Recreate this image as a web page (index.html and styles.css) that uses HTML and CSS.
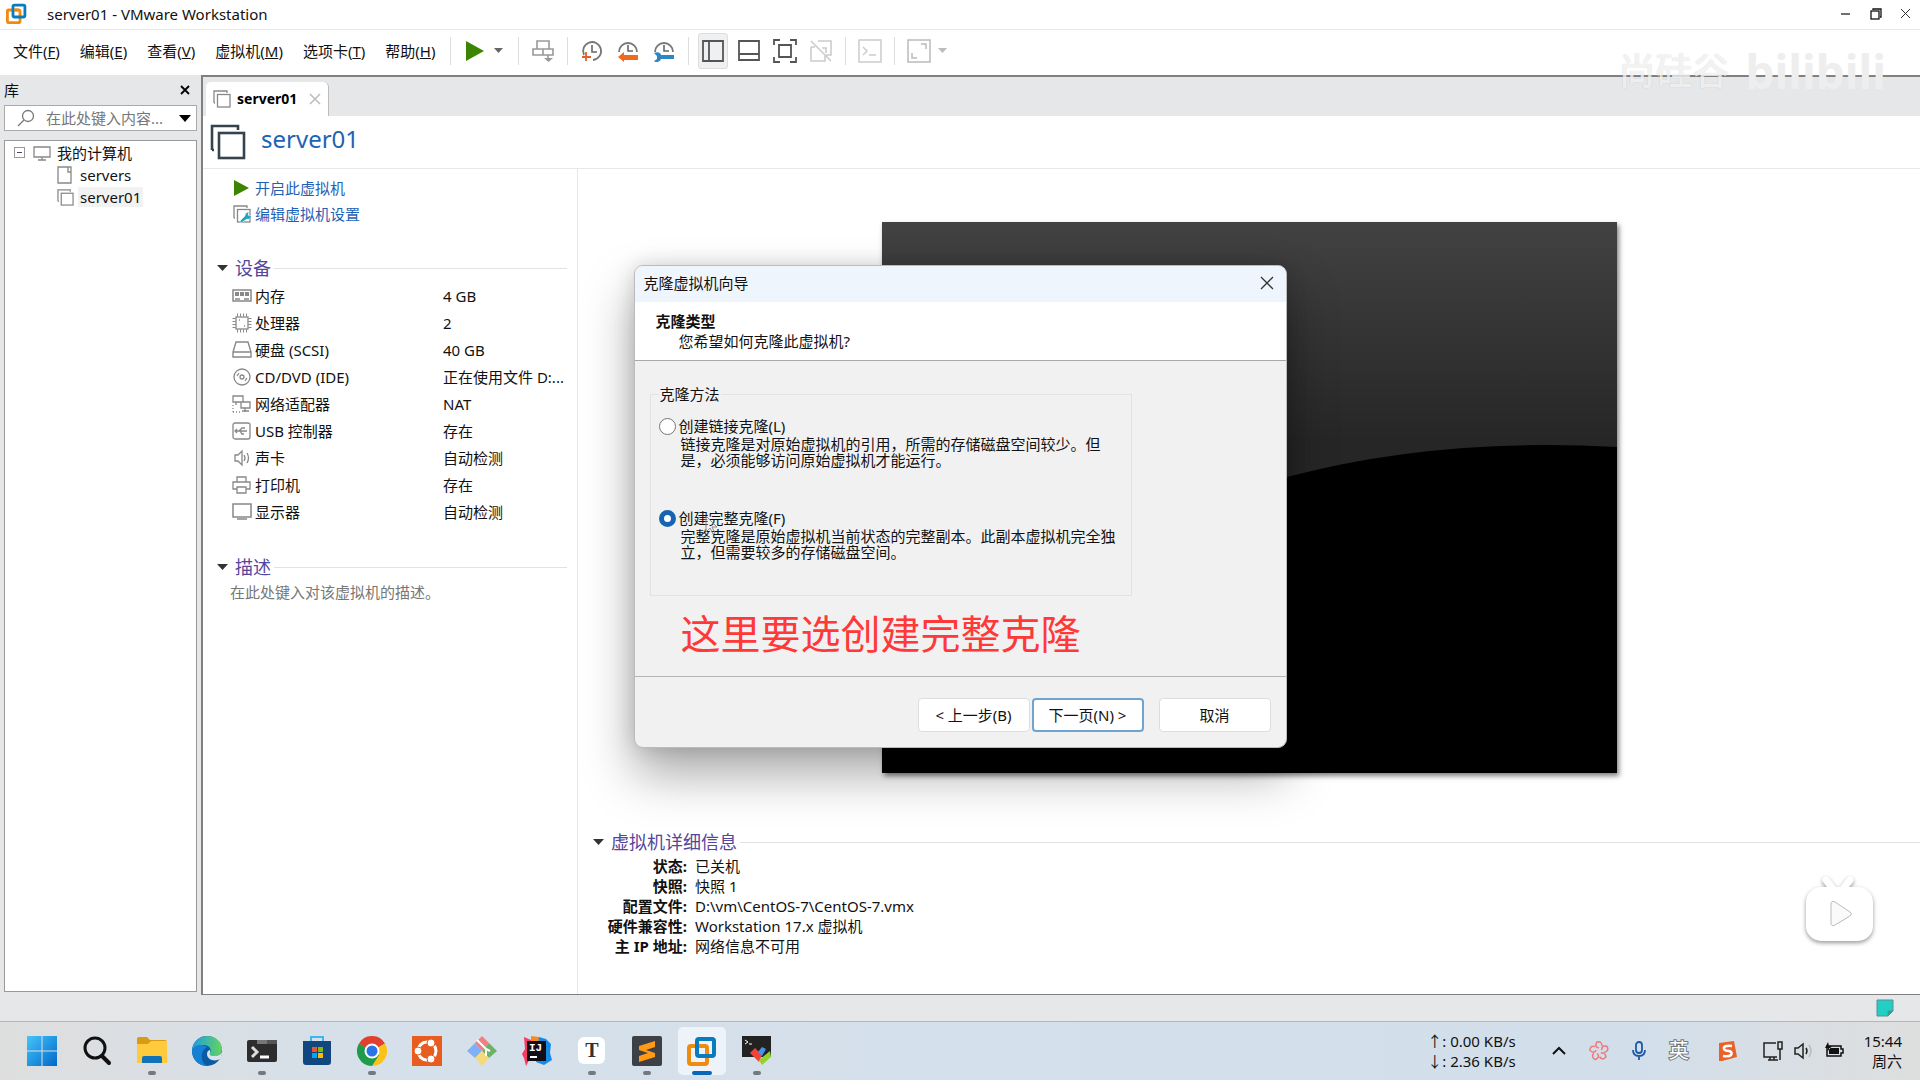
FILE: index.html
```html
<!DOCTYPE html>
<html lang="zh-CN">
<head>
    <meta charset="UTF-8">
    <meta name="viewport" content="width=device-width, initial-scale=1.0">
    <title>server01 - VMware Workstation</title>
    <link rel="stylesheet" href="styles.css">
</head>
<body>
    <svg class="defs" width="0" height="0">
        <symbol id="vmware" viewBox="0 0 30 30">
            <rect x="2" y="10" width="18" height="18" rx="2" fill="none" stroke="#ef8c10" stroke-width="4"/>
            <rect x="10" y="3" width="17" height="17" rx="2" fill="none" stroke="#0a7cbd" stroke-width="4"/>
            <path d="M12 10h6" fill="none" stroke="#ef8c10" stroke-width="4"/>
        </symbol>
        <symbol id="vm" viewBox="0 0 18 18">
            <path d="M1 13V1h13v2M1 13h1" fill="none" stroke="currentColor" stroke-width="1.3"/>
            <rect x="4.500" y="4.500" width="12.500" height="12.500" fill="none" stroke="currentColor" stroke-width="1.3"/>
        </symbol>
        <symbol id="clock" viewBox="0 0 22 22">
            <path d="M3 15a9 9 0 1 1 9 5" fill="none" stroke="#777" stroke-width="1.8"/>
            <path d="M11 5v7h5" fill="none" stroke="#666" stroke-width="1.6"/>
        </symbol>
        <symbol id="clock-half" viewBox="0 0 22 22">
            <path d="M2 12a9 9 0 1 1 18 0" fill="none" stroke="#777" stroke-width="1.8"/>
            <path d="M11 5v6h5" fill="none" stroke="#666" stroke-width="1.6"/>
        </symbol>
    </svg>

    <!-- 标题栏 -->
    <header class="titlebar">
        <svg class="logo" width="21" height="21"><use href="#vmware"/></svg>
        <span class="name">server01 - VMware Workstation</span>
        <button class="win" aria-label="最小化"><svg width="12" height="12"><path d="M1 6h9" stroke="#111" stroke-width="1.2"/></svg></button>
        <button class="win" aria-label="还原"><svg width="12" height="12" fill="none" stroke="#111" stroke-width="1.3"><path d="M3 2V1h8v8h-1"/><rect x="1" y="3" width="8" height="8"/></svg></button>
        <button class="win" aria-label="关闭"><svg width="12" height="12"><path d="M1 1l9 9M10 1l-9 9" stroke="#333"/></svg></button>
    </header>

    <!-- 菜单和工具栏 -->
    <nav class="menubar">
        <div class="menus">
            <button>文件(<u>F</u>)</button>
            <button>编辑(<u>E</u>)</button>
            <button>查看(<u>V</u>)</button>
            <button>虚拟机(<u>M</u>)</button>
            <button>选项卡(<u>T</u>)</button>
            <button>帮助(<u>H</u>)</button>
        </div>
        <div class="tools">
            <button aria-label="开启"><svg width="20" height="22"><path d="M1 1l18 10-18 10z" fill="#3c8500"/></svg></button>
            <button class="drop" aria-label="电源选项"><svg width="10" height="6"><path d="M0 0h9l-4.500 5z" fill="#666"/></svg></button>
        </div>
        <div class="tools">
            <button aria-label="发送按键"><svg width="22" height="24" fill="none" stroke="#999" stroke-width="1.6"><path d="M5 10V2h12v8M1 10h20v6H1zM11 10v6M16 16v5"/><path d="M12 19h9l-4.500 4z" fill="#999" stroke="none"/></svg></button>
        </div>
        <div class="tools">
            <button aria-label="拍摄快照"><svg width="22" height="22"><use href="#clock"/><path d="M5 12v9M1 17h9" stroke="#e0622a" stroke-width="1.800"/></svg></button>
            <button aria-label="恢复快照"><svg width="22" height="22"><use href="#clock-half"/><path d="M1 17l6-5v3h14v5H7v2z" fill="#f06a1a"/></svg></button>
            <button aria-label="管理快照"><svg width="22" height="22"><use href="#clock-half"/><path d="M1 13c4-2 7 0 7 2h13v4H8c-1 3-5 4-7 2l3-2v-3z" fill="#2f86c4"/></svg></button>
        </div>
        <div class="tools">
            <button class="on" aria-label="显示库"><svg width="22" height="22" fill="none" stroke="#555" stroke-width="1.800"><path d="M1 1h20v20H1zM7 1v20"/></svg></button>
            <button aria-label="缩略图栏"><svg width="22" height="22" fill="none" stroke="#555" stroke-width="1.800"><path d="M1 1h20v19H1zM1 14h20"/></svg></button>
            <button aria-label="全屏"><svg width="24" height="24" fill="none" stroke="#555" stroke-width="1.800"><path d="M1 6V1h6M17 1h6v5M23 18v5h-6M7 23H1v-5M6 6h12v12H6z"/></svg></button>
            <button aria-label="Unity"><svg width="22" height="22" fill="none" stroke="#ccc" stroke-width="1.600"><path d="M1 7v14h14V15M1 7h4M8 1h13v14h-5M12 8h4v5M1 1l20 20"/></svg></button>
        </div>
        <div class="tools">
            <button aria-label="控制台"><svg width="24" height="24" fill="none" stroke="#ccc" stroke-width="1.500"><path d="M1 1h22v22H1zM5 8l4 4-4 4M11 16h7"/></svg></button>
        </div>
        <div class="tools">
            <button aria-label="拉伸"><svg width="24" height="24" fill="none" stroke="#bbb" stroke-width="1.500"><path d="M1 1h22v22H1zM14 5h5v5M10 19H5v-5"/></svg></button>
            <button class="drop" aria-label="拉伸选项"><svg width="10" height="6"><path d="M0 0h9l-4.500 5z" fill="#bbb"/></svg></button>
        </div>
    </nav>

    <div class="workspace">
        <!-- 库 -->
        <aside class="library">
            <div class="lib-head">
                <span>库</span>
                <button aria-label="关闭库"><svg width="10" height="10"><path d="M1 1l8 8M9 1l-8 8" stroke="#000" stroke-width="1.800"/></svg></button>
            </div>
            <div class="search">
                <svg width="18" height="18" fill="none" stroke="#777" stroke-width="1.300"><circle cx="11" cy="7" r="5.500"/><path d="M7 11l-6 6"/></svg>
                <input type="text" aria-label="搜索" placeholder="在此处键入内容...">
                <button aria-label="搜索选项"><svg width="12" height="7"><path d="M0 0h12l-6 7z" fill="#000"/></svg></button>
            </div>
            <ul class="tree">
                <li><svg width="12" height="12" fill="none" stroke="#999"><rect x=".5" y=".5" width="10" height="10"/><path d="M3 5.500h5" stroke="#447"/></svg><svg width="18" height="15" fill="none" stroke="#888" stroke-width="1.300"><path d="M1 1h16v10H1zM9 11v3M5 14h8"/></svg><span>我的计算机</span></li>
                <li class="child"><svg width="17" height="18" fill="none" stroke="#888" stroke-width="1.300"><path d="M14 6v11H1V1h13v5h-3V1"/></svg><span>servers</span></li>
                <li class="child sel"><svg width="17" height="17"><use href="#vm"/></svg><span>server01</span></li>
            </ul>
        </aside>

        <main class="main">
            <div class="tabs">
                <div class="tab">
                    <svg width="18" height="18"><use href="#vm"/></svg>
                    <b>server01</b>
                    <button aria-label="关闭标签"><svg width="12" height="12"><path d="M1 1l10 10M11 1L1 11" stroke="#bbb" stroke-width="1.500"/></svg></button>
                </div>
            </div>
            <div class="vm-head">
                <svg width="36" height="36" viewBox="0 0 18 18"><use href="#vm"/></svg>
                <h1>server01</h1>
            </div>

            <div class="vm-body">
                <section class="side">
                    <a class="action" href="#"><svg width="18" height="18"><path d="M1 1l15 8-15 8z" fill="#3c8500"/></svg>开启此虚拟机</a>
                    <a class="action" href="#"><svg width="18" height="18"><g color="#888"><use href="#vm"/></g><path d="M8 18l-1-2 5-5c0-3 2-4 4-4l-1 3 2 1 1-1c1 3-2 5-4 4z" fill="#1da3c4" stroke="#fff" stroke-width=".5"/></svg>编辑虚拟机设置</a>

                    <h2 class="devices-title"><svg width="11" height="7"><path d="M0 0h11l-5.500 6z" fill="#333"/></svg>设备</h2>
                    <dl class="devices">
                        <dt><svg width="20" height="18" fill="none" stroke="#888" stroke-width="1.500"><path d="M1 3h18v11H1z"/><path d="M3 7h14" stroke-width="4" stroke-dasharray="4 1"/><path d="M3 12h5M12 12h5"/></svg>内存</dt><dd>4 GB</dd>
                        <dt><svg width="20" height="20" fill="none" stroke="#888" stroke-width="1.300"><rect x="4" y="4" width="12" height="12"/><path d="M5 2h10M5 18h10M2 5v10M18 5v10" stroke-width="3" stroke-dasharray="1 2"/><path d="M7 7h1M12 13h1"/></svg>处理器</dt><dd>2</dd>
                        <dt><svg width="20" height="18" fill="none" stroke="#888" stroke-width="1.400"><path d="M4 1h12l3 10v5H1v-5zM1 11h18"/></svg>硬盘 (SCSI)</dt><dd>40 GB</dd>
                        <dt><svg width="20" height="18" fill="none" stroke="#888" stroke-width="1.300"><circle cx="10" cy="9" r="8"/><circle cx="10" cy="9" r="2"/><path d="M5 8l2-3M15 10l-2 3"/></svg>CD/DVD (IDE)</dt><dd>正在使用文件 D:...</dd>
                        <dt><svg width="20" height="18" fill="none" stroke="#888" stroke-width="1.300"><path d="M1 1h10v6H1zM4 7v3M9 7h9v6H9zM13 13v4M10 16h7"/><path d="M1 17h9M1 10v7" stroke-dasharray="1 2"/></svg>网络适配器</dt><dd>NAT</dd>
                        <dt><svg width="20" height="18" fill="none" stroke="#888" stroke-width="1.300"><rect x="1" y="1" width="17" height="16" rx="2"/><path d="M4 9h11M7 9l3-3h3M8 9l2 3h2M5 7L3 9l2 2"/></svg>USB 控制器</dt><dd>存在</dd>
                        <dt><svg width="20" height="18" fill="none" stroke="#888" stroke-width="1.300"><path d="M3 6h3l4-4v14l-4-4H3zM12 6q2 3 0 6M15 4q3 5 0 10"/></svg>声卡</dt><dd>自动检测</dd>
                        <dt><svg width="20" height="18" fill="none" stroke="#888" stroke-width="1.300"><path d="M5 6V1h9v5M5 13H1V6h17v7h-4M5 11h9v6H5z"/></svg>打印机</dt><dd>存在</dd>
                        <dt><svg width="20" height="18" fill="none" stroke="#888" stroke-width="1.500"><path d="M1 1h18v13H1zM5 16h10"/></svg>显示器</dt><dd>自动检测</dd>
                    </dl>

                    <h2><svg width="11" height="7"><path d="M0 0h11l-5.500 6z" fill="#333"/></svg>描述</h2>
                    <p class="note">在此处键入对该虚拟机的描述。</p>
                </section>

                <section class="summary">
                    <svg class="preview" viewBox="0 0 735 551" preserveAspectRatio="none">
                        <defs>
                            <linearGradient id="sky" x1="0" y1="0" x2="0" y2="1">
                                <stop offset="0" stop-color="#424242"/>
                                <stop offset=".5" stop-color="#262626"/>
                            </linearGradient>
                        </defs>
                        <rect width="735" height="551" fill="#000"/>
                        <path d="M0 0h735v225q-180-10-330 30Q180 320 0 440z" fill="url(#sky)"/>
                    </svg>
                    <h2><svg width="11" height="7"><path d="M0 0h11l-5.500 6z" fill="#333"/></svg>虚拟机详细信息</h2>
                    <dl class="details">
                        <dt>状态:</dt><dd>已关机</dd>
                        <dt>快照:</dt><dd>快照 1</dd>
                        <dt>配置文件:</dt><dd>D:\vm\CentOS-7\CentOS-7.vmx</dd>
                        <dt>硬件兼容性:</dt><dd>Workstation 17.x 虚拟机</dd>
                        <dt>主 IP 地址:</dt><dd>网络信息不可用</dd>
                    </dl>
                </section>
            </div>
        </main>
    </div>

    <div class="statusbar">
        <svg width="18" height="18"><path d="M1 1h16v11l-5 5H1z" fill="#22cfc4" stroke="#5a8f90"/><path d="M17 12h-5v5" fill="#17a9a6" stroke="#5a8f90"/></svg>
    </div>

    <!-- 任务栏 -->
    <footer class="taskbar">
        <div class="apps">
            <button aria-label="开始"><svg width="30" height="30"><defs><linearGradient id="win" x1="0" y1="0" x2="1" y2="1"><stop offset="0" stop-color="#45c5fb"/><stop offset="1" stop-color="#0068c8"/></linearGradient></defs><path d="M0 0h14.500v14.500H0zM15.500 0H30v14.500H15.500zM0 15.500h14.500V30H0zM15.500 15.500H30V30H15.500z" fill="url(#win)"/></svg></button>
            <button aria-label="搜索"><svg width="30" height="30" fill="none" stroke="#111"><circle cx="13" cy="12" r="10" stroke-width="3"/><path d="M20 20l7 7" stroke-width="4" stroke-linecap="round"/></svg></button>
            <button class="run" aria-label="文件资源管理器"><svg width="30" height="30"><path d="M0 3q0-2 2-2h8l3 3h15q2 0 2 2v8H0z" fill="#d99a14"/><path d="M0 8h11l3-3h16v22H0z" fill="#ffcb3d"/><path d="M5 27v-5q0-2 2-2h16q2 0 2 2v5z" fill="#1272b8"/></svg></button>
            <button aria-label="Edge"><svg width="30" height="30"><defs><linearGradient id="edge" x1="0" y1="0" x2="1" y2="0"><stop offset="0" stop-color="#1b9de2"/><stop offset="1" stop-color="#65d45f"/></linearGradient></defs><circle cx="15" cy="15" r="15" fill="#0c59a4"/><path d="M0 14C1 5 8 0 15 0c9 0 15 6 15 13 0 5-4 7-8 7-3 0-5-1-4-3 2-4-1-8-6-8-6 0-10 3-12 5z" fill="url(#edge)"/><path d="M0 14c0 9 6 16 15 16-6-3-8-14 0-19-7-4-13-1-15 3z" fill="#1681d4"/><path d="M18 17c-1 2 1 3 4 3 3 0 6-1 8-4 0 3-1 6-2 7-5 3-13 1-13-5 0-3 2-4 3-4z" fill="#d9e3ea"/></svg></button>
            <button class="run" aria-label="终端"><svg width="30" height="30"><rect y="4" width="30" height="22" rx="2" fill="#2d2d2d"/><path d="M10 4h10v4H10z" fill="#777"/><path d="M20 4h10v4H20z" fill="#555"/><path d="M5 11l5 5-5 5" fill="none" stroke="#ddd" stroke-width="3"/><path d="M13 21h9" stroke="#fff" stroke-width="3"/></svg></button>
            <button aria-label="商店"><svg width="30" height="30"><path d="M9 6V1h12v5" fill="none" stroke="#39b8ef" stroke-width="2"/><path d="M1 5h28v21q0 3-3 3H4q-3 0-3-3z" fill="#12467f"/><path d="M10 11h5v5h-5z" fill="#f0532d"/><path d="M16 11h5v5h-5z" fill="#80bc06"/><path d="M10 17h5v5h-5z" fill="#05a6f0"/><path d="M16 17h5v5h-5z" fill="#ffba08"/></svg></button>
            <button class="run" aria-label="Chrome"><svg width="30" height="30"><path d="M15 15L2 7.500A15 15 0 0 1 28 7.500z" fill="#e2402f"/><path d="M15 15L28 7.500A15 15 0 0 1 15 30z" fill="#fbc318"/><path d="M15 15l7 4-7 11A15 15 0 0 1 2 7.500z" fill="#209b4c"/><path d="M2 7.500h26H15v7.500z" fill="#e2402f"/><circle cx="15" cy="15" r="7.500" fill="#fff"/><circle cx="15" cy="15" r="5.500" fill="#2a74e8"/></svg></button>
            <button aria-label="Ubuntu"><svg width="30" height="30"><rect width="30" height="30" fill="#e85c1f"/><circle cx="15" cy="15" r="9" fill="none" stroke="#fff" stroke-width="3"/><g fill="#fff" stroke="#e85c1f"><circle cx="6" cy="15" r="4"/><circle cx="19" cy="7" r="4"/><circle cx="19" cy="23" r="4"/></g></svg></button>
            <button aria-label="Git"><svg width="30" height="30"><path d="M15 0l7 7-7 8-7-8z" fill="#f08080"/><path d="M8 7l7 8-7 7-8-7z" fill="#80b0f5"/><path d="M22 7l8 8-8 7-7-7z" fill="#6fb267"/><path d="M15 15l7 7-7 8-7-8z" fill="#f5da7c"/><path d="M10 4l9 9v7M19 13l4 2" fill="none" stroke="#fff" stroke-width="2"/></svg></button>
            <button aria-label="IntelliJ IDEA"><svg width="30" height="30"><path d="M2 1l7 3 3 11-8 15-2-8-2-4 3-5z" fill="#f53b67"/><path d="M9 0l8 1 4 9-12-2z" fill="#f78a21"/><path d="M17 1l7 2 5 5-1 9 2 7-8 5-8-3z" fill="#168be6"/><rect x="5" y="5" width="19" height="20" fill="#120d18"/><text x="7" y="15" class="ij">IJ</text><path d="M8 21h7" stroke="#fff" stroke-width="2"/></svg></button>
            <button class="run" aria-label="Typora"><svg width="30" height="30"><rect x="1" y="1" width="27" height="27" rx="6" fill="#fff"/><text x="15" y="21" class="typora">T</text></svg></button>
            <button class="run" aria-label="Sublime Text"><svg width="30" height="30"><rect width="30" height="30" rx="2" fill="#3d4044"/><path d="M7 10l16-5v6l-9 3 9 3v4L7 26v-6l9-3-9-3z" fill="#ff9a12"/></svg></button>
            <button class="run active" aria-label="VMware"><svg width="30" height="30"><use href="#vmware"/></svg></button>
            <button class="run" aria-label="MobaXterm"><svg width="30" height="30"><rect y="0" width="29" height="21" fill="#222"/><path d="M3 4l3 2-3 2M7 8h3" fill="none" stroke="#fff"/><path d="M8 17l5-5 7 7-3 7z" fill="#f04438"/><path d="M20 11l4 2-4 7-4-4z" fill="#4a90ee"/><path d="M17 24l11-9 1 6-9 8z" fill="#8fd32c"/></svg></button>
        </div>
        <div class="net">↑: 0.00 KB/s<br>↓: 2.36 KB/s</div>
        <div class="tray">
            <svg width="20" height="20"><path d="M4 13l6-6 6 6" fill="none" stroke="#111" stroke-width="2"/></svg>
            <svg width="20" height="20" fill="none" stroke="#f07878" stroke-width="1.500"><path id="petal" d="M10 7Q5 6 8 1q5-1 5 4"/><use href="#petal" transform="rotate(72 10 10)"/><use href="#petal" transform="rotate(144 10 10)"/><use href="#petal" transform="rotate(216 10 10)"/><use href="#petal" transform="rotate(288 10 10)"/></svg>
            <svg width="20" height="20" fill="none" stroke="#1d5aa6" stroke-width="1.800"><rect x="7" y="1" width="6" height="11" rx="3"/><path d="M4 9q0 6 6 6t6-6M10 15v4"/></svg>
            <span class="ime">英</span>
        </div>
        <div class="tray sys">
            <svg width="20" height="20"><path d="M2 2l15-2 3 16-15 4H2z" fill="#e8622a"/><path d="M15 5Q6 4 7 8q1 2 5 2 4 1 2 4-2 2-8 1" fill="none" stroke="#fff" stroke-width="2.500"/></svg>
            <svg width="22" height="20" fill="none" stroke="#222" stroke-width="1.500"><path d="M14 2H2v14h13M6 19h10M8 16v3M12 16v3M16 1h4v7h-4zM18 8v11"/></svg>
            <svg width="20" height="20" fill="none" stroke="#222" stroke-width="1.500"><path d="M1 7h3l5-4v14l-5-4H1zM12 7q2 3 0 6"/><path d="M15 4q4 6 0 12" stroke="#bbb"/></svg>
            <svg width="20" height="20"><path d="M3 5h14v3h2v4h-2v3H3z" fill="none" stroke="#111" stroke-width="1.500"/><path d="M5 7h10v6H5zM4 1l-3 6h3l-1 4 5-6H5z" fill="#111"/></svg>
        </div>
        <div class="clock">15:44<br>周六</div>
    </footer>

    <!-- 克隆向导 -->
    <div class="overlay">
        <form class="dialog" role="dialog" aria-label="克隆虚拟机向导">
            <div class="dlg-title">
                <span>克隆虚拟机向导</span>
                <button type="button" aria-label="关闭"><svg width="14" height="14"><path d="M1 1l12 12M13 1L1 13" stroke="#333" stroke-width="1.300"/></svg></button>
            </div>
            <div class="dlg-head">
                <b>克隆类型</b>
                <p>您希望如何克隆此虚拟机?</p>
            </div>
            <div class="dlg-body">
                <fieldset>
                    <legend>克隆方法</legend>
                    <div class="option">
                        <input type="radio" name="clone" id="linked">
                        <label for="linked">创建链接克隆(L)</label>
                        <p>链接克隆是对原始虚拟机的引用，所需的存储磁盘空间较少。但是，必须能够访问原始虚拟机才能运行。</p>
                    </div>
                    <div class="option">
                        <input type="radio" name="clone" id="full" checked>
                        <label for="full">创建完整克隆(F)</label>
                        <p>完整克隆是原始虚拟机当前状态的完整副本。此副本虚拟机完全独立，但需要较多的存储磁盘空间。</p>
                        <svg class="cursor" width="14" height="20"><path d="M1 1v16l4-4 3 6 2-1-3-6h5z" fill="none" stroke="#888"/></svg>
                    </div>
                </fieldset>
                <p class="tip">这里要选创建完整克隆</p>
            </div>
            <div class="dlg-foot">
                <button type="button">&lt; 上一步(B)</button>
                <button type="button" class="next">下一页(N) &gt;</button>
                <button type="button" class="cancel">取消</button>
            </div>
        </form>
    </div>

    <div class="watermark"><span>尚硅谷</span><b>bilibili</b></div>
    <button class="play" aria-label="播放">
        <svg width="76" height="76" viewBox="0 0 76 76">
            <path d="M24 9l7 9M48 9l-7 9" stroke="#fff" stroke-width="7" stroke-linecap="round"/>
            <rect x="4" y="16" width="67" height="54" rx="15" fill="#fff"/>
            <path d="M29 33v19q0 4 4 2l15-9q3-2 0-4l-15-10q-4-2-4 2z" fill="#fafafa" stroke="#bbb"/>
        </svg>
    </button>
</body>
</html>
```
FILE: styles.css
```css
* { box-sizing: border-box; margin: 0; padding: 0; }
body {
    display: flex; flex-direction: column;
    height: 100vh; overflow: hidden;
    position: relative;
    background-color: #e5e7e9;
    color: #111;
    font-family: "Noto Sans", "Noto Sans CJK SC", sans-serif;
    font-size: 15px; line-height: 20px;
}
button, input { font: inherit; color: inherit; border: none; background: none; }
button { display: flex; align-items: center; justify-content: center; }
svg { flex: none; display: block; }
ul { list-style: none; }
a { text-decoration: none; }
.defs { position: absolute; }

/* 标题栏 */
.titlebar {
    display: flex; align-items: center;
    height: 30px; padding: 0 8px 2px 6px;
    background-color: #fff;
    border-bottom: 1px solid #e8e8e8;
}
.name { margin-left: 20px; margin-right: auto; }
.win { width: 12px; height: 20px; margin-left: 18px; }

/* 菜单栏 */
.menubar {
    display: flex; align-items: center;
    height: 45px; padding: 0 0 3px 13px;
    background-color: #fff;
}
.menus { display: flex; gap: 20px; margin-right: 15px; }
.menus button { white-space: nowrap; }
.tools {
    display: flex; align-items: center; gap: 6px;
    height: 28px; padding: 0 9px;
    border-left: 1px solid #ddd;
}
.tools button { width: 30px; height: 36px; }
.tools .drop { width: 14px; margin: 0 3px 0 -4px; }
.tools .on { background-color: #eef0f1; border: 1px solid #ddd; border-radius: 3px; }

/* 库 */
.workspace { display: flex; flex: 1; min-height: 0; }
.library {
    display: flex; flex-direction: column;
    width: 201px; padding: 0 4px 3px 4px;
}
.lib-head { display: flex; justify-content: space-between; align-items: center; height: 30px; padding-right: 7px; }
.search {
    display: flex; align-items: center;
    height: 26px; padding: 0 5px 0 12px;
    border: 1px solid #aaa; background-color: #fff;
}
.search input { flex: 1; min-width: 0; margin-left: 11px; outline: none; }
.search input::placeholder { color: #777; }
.tree { flex: 1; margin-top: 9px; padding: 1px 9px; background-color: #fff; border: 1px solid #999; }
.tree li { display: flex; align-items: center; height: 22px; }
.tree li svg + svg { margin-left: 7px; }
.tree span { margin-left: 4px; padding: 0 2px; }
.tree .child { padding-left: 43px; color: #111; }
.tree .child svg { color: #888; }
.sel span { background-color: #f2f2f2; }

/* 主区域 */
.main {
    display: flex; flex-direction: column; flex: 1; min-width: 0;
    border: solid #808080; border-width: 2px 0 1px 2px;
    background-color: #fff;
}
.tabs { display: flex; align-items: flex-end; height: 39px; padding-left: 3px; background-color: #e5e7e9; }
.tab {
    display: flex; align-items: center; gap: 6px;
    height: 34px; padding: 0 7px;
    background-color: #fff; color: #888;
    border-right: 1px solid #bbb; border-radius: 5px 5px 0 0;
}
.tab b { color: #000; font-size: 14px; }
.tab button { margin-left: 6px; }
.vm-head {
    display: flex; align-items: center; gap: 15px;
    height: 53px; padding-left: 7px;
    color: #34434d; border-bottom: 1px solid #e8e8e8;
}
h1 { margin-bottom: 6px; font-size: 24px; line-height: 32px; font-weight: 400; color: #1f62b5; }
.vm-body { display: flex; flex: 1; min-height: 0; }
.side { width: 375px; padding: 6px 10px 0 14px; border-right: 1px solid #e8e8e8; }
.action { display: flex; align-items: center; gap: 4px; height: 26px; padding-left: 16px; color: #1f62b5; }
h2 {
    display: flex; align-items: center; gap: 7px;
    color: #54469b;
    font-size: 18px; line-height: 26px; font-weight: 400;
}
h2::after { content: ""; flex: 1; height: 1px; margin-left: -4px; background-color: #e2e2e2; }
.devices-title { margin-top: 28px; }
.devices {
    display: grid; grid-template-columns: 211px 1fr; grid-auto-rows: 27px; align-items: center;
    margin: 1px 0 29px 15px;
}
.devices dt { display: flex; align-items: center; gap: 3px; }
.devices dd { white-space: nowrap; }
.note { padding-left: 13px; margin-top: 2px; color: #777; }

.summary { display: flex; flex-direction: column; flex: 1; min-width: 0; padding: 53px 0 0 15px; }
.preview {
    align-self: center;
    width: 735px; max-width: 100%; height: 551px;
    margin: 0 15px 56px 0;
    box-shadow: 2px 3px 5px rgba(0, 0, 0, .5);
}
.details { display: grid; grid-template-columns: 94px 1fr; column-gap: 8px; margin-top: 1px; }
.details dt { text-align: right; font-weight: 700; white-space: nowrap; }

.statusbar { display: flex; align-items: center; justify-content: flex-end; height: 26px; padding-right: 26px; }

/* 任务栏 */
.taskbar {
    display: flex; align-items: center;
    height: 59px; padding: 0 18px;
    border-top: 1px solid #b5b8bb;
    background: linear-gradient(90deg, #dedede, #d5e0ea 20%, #d2dfeb 85%, #dedede);
}
.apps { display: flex; gap: 7px; margin-right: auto; }
.apps button { position: relative; width: 48px; height: 48px; border-radius: 5px; }
.apps .active { background-color: #eef3f9; }
.run::after {
    content: ""; position: absolute; bottom: 0; left: 20px;
    width: 8px; height: 4px; border-radius: 2px;
    background-color: #74797f;
}
.active::after { left: 14px; width: 20px; background-color: #0867b6; }
.ij { font: 700 11px "Liberation Mono", monospace; fill: #fff; }
.typora { font: 700 20px "Liberation Serif", serif; text-anchor: middle; fill: #333; }
.net { margin-right: 33px; white-space: nowrap; }
.tray { display: flex; align-items: center; gap: 20px; }
.sys { gap: 10px; margin: 0 20px 0 28px; }
.sys svg:first-child { margin-right: 15px; }
.ime {
    width: 20px;
    font-size: 20px; color: #fff;
    -webkit-text-stroke: 2px #777;
    paint-order: stroke fill;
}
.clock { text-align: right; white-space: nowrap; }

/* 克隆向导 */
.overlay {
    position: absolute; inset: 0;
    display: flex; justify-content: center; align-items: flex-start;
    padding-top: 265px;
    pointer-events: none;
}
.dialog {
    width: 653px; overflow: visible;
    background-color: #f1f1f1;
    border: 1px solid #bbb; border-radius: 9px;
    box-shadow: 0 26px 50px rgba(0, 0, 0, .34), 0 0 20px rgba(0, 0, 0, .15);
    pointer-events: auto;
}
.dlg-title {
    display: flex; align-items: center; justify-content: space-between;
    height: 36px; padding: 0 12px 2px 9px;
    background-color: #eff5fd; border-radius: 8px 8px 0 0;
}
.dlg-head { height: 59px; padding: 9px 21px 0; background-color: #fff; border-bottom: 1px solid #a8a8a8; }
.dlg-head b { display: block; }
.dlg-head p { padding-left: 23px; }
.dlg-body { padding: 23px 15px 17px; }
fieldset { width: 482px; height: 212px; padding: 12px 7px 0 8px; border: 1px solid #e2e2e2; }
legend { padding: 0 1px; }
.option {
    position: relative;
    display: grid; grid-template-columns: 17px 1fr; column-gap: 3px; align-items: center;
    min-height: 92px; align-content: start;
}
.option input {
    appearance: none;
    width: 17px; height: 17px;
    border: 1px solid #777; border-radius: 50%;
    background-color: #fff;
}
.option input:checked { border: 5px solid #1764b0; }
.option p { grid-column: 2; padding-left: 2px; line-height: 16px; }
.cursor { position: absolute; left: 46px; top: 7px; }
.tip { padding: 13px 0 0 31px; color: #ff3838; font-size: 40px; line-height: 50px; }
.dlg-foot {
    display: flex; justify-content: flex-end;
    height: 71px; padding: 21px 15px 0;
    border-top: 1px solid #b5b5b5;
}
.dlg-foot button {
    width: 112px; height: 34px; margin-left: 2px;
    background-color: #fff;
    border: 1px solid #ddd; border-radius: 4px;
}
.dlg-foot .next { border: 2px solid #6fa3d0; }
.dlg-foot .cancel { margin-left: 15px; }

/* 水印 */
.watermark {
    position: absolute; top: 40px; right: 34px;
    display: flex; align-items: center; gap: 16px;
    color: rgba(255, 255, 255, .75);
    font-size: 37px; line-height: 62px; font-weight: 500;
    text-shadow: 0 0 1px rgba(0, 0, 0, .2);
    pointer-events: none;
}
.watermark b { color: #eee; font-size: 46px; text-shadow: none; }
.play {
    position: absolute; right: 42px; bottom: 133px;
    filter: drop-shadow(0 2px 2px rgba(0, 0, 0, .4));
}
```
